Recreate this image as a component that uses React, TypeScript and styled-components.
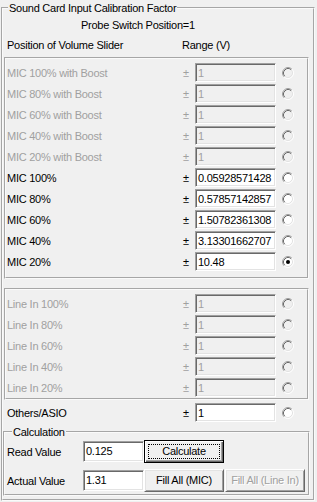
import React from 'react';
import styled, { createGlobalStyle, css } from 'styled-components';

const GlobalStyle = createGlobalStyle`
  html, body {
    margin: 0;
    padding: 0;
    background: #f0f0f0;
  }
  body {
    font-family: "Liberation Sans", Arial, sans-serif;
    font-size: 11px;
    line-height: 13px;
    letter-spacing: -0.25px;
    color: #000;
  }
`;

const Window = styled.div`
  width: 317px;
  height: 502px;
  overflow: hidden;
`;

const etched = css`
  box-sizing: border-box;
  min-width: 0;
  border: 2px groove #fafafa;
`;

const OuterGroup = styled.fieldset`
  ${etched}
  width: 314px;
  margin: 2px 0 0 1px;
  padding: 0 0 3px;
`;

const Caption = styled.legend`
  margin-left: 5px;
  padding: 0 1px;
  line-height: 12px;
`;

const ProbeLine = styled.div`
  margin: 5px 0 0 78px;
`;

const HeaderRow = styled.div`
  display: grid;
  grid-template-columns: 175px auto;
  margin-top: 7px;
  padding-left: 4px;
`;

const ChannelGroup = styled.fieldset<{ $top: number; $bottom: number }>`
  ${etched}
  display: flex;
  flex-direction: column;
  gap: 2px;
  width: 305px;
  margin: ${p => p.$top}px 0 0 1px;
  padding: 4px 0 ${p => p.$bottom}px;
`;

const Row = styled.div<{ $indent: number; $disabled?: boolean; $top?: number }>`
  display: grid;
  grid-template-columns: 175px 13px 81px 18px;
  align-items: center;
  height: 19px;
  margin-top: ${p => p.$top ?? 0}px;
  padding-left: ${p => p.$indent}px;
  color: ${p => (p.$disabled ? '#a0a0a0' : '#000')};
`;

const RowLabel = styled.span`
  padding-top: 1px;
  white-space: nowrap;
`;

const PlusMinus = styled.span`
  padding: 1px 0 0 1px;
`;

const ValueBox = styled.div<{ $disabled?: boolean; $height?: number }>`
  box-sizing: border-box;
  height: ${p => p.$height ?? 19}px;
  padding: 3px 0 0 2px;
  border: 1px solid;
  border-color: #a0a0a0 #fff #fff #a0a0a0;
  box-shadow: inset 1px 1px #696969, inset -1px -1px #e3e3e3;
  background: ${p => (p.$disabled ? '#f0f0f0' : '#fff')};
  color: ${p => (p.$disabled ? '#a0a0a0' : '#000')};
  white-space: nowrap;
  overflow: hidden;
`;

const RadioIcon = styled.svg`
  display: block;
  justify-self: end;
`;

const CalcGroup = styled.fieldset`
  ${etched}
  display: flex;
  flex-direction: column;
  gap: 6px;
  width: 307px;
  margin: 4px 0 0;
  padding: 2px 0 2px 2px;
`;

const CalcRow = styled.div`
  display: grid;
  grid-template-columns: 76px 61px 81px 80px;
  align-items: center;
  height: 23px;
`;

const CalcLabel = styled.span`
  padding-top: 1px;
`;

const PushButton = styled.button<{ $default?: boolean }>`
  box-sizing: border-box;
  width: 80px;
  height: 23px;
  margin: 0;
  padding: 0 0 1px;
  font: inherit;
  letter-spacing: inherit;
  color: #000;
  background: #f0f0f0;
  border: 1px solid;
  border-color: #fff #696969 #696969 #fff;
  box-shadow: inset 1px 1px #e3e3e3, inset -1px -1px #a0a0a0;
  white-space: nowrap;

  ${p =>
    p.$default &&
    css`
      border-color: #000;
      box-shadow: inset 1px 1px #fff, inset -1px -1px #696969, inset -2px -2px #a0a0a0;
      outline: 1px dotted #000;
      outline-offset: -5px;
    `}

  &:disabled {
    color: #a0a0a0;
    text-shadow: 1px 1px #fff;
  }
`;

type Channel = { label: string; value: string; disabled?: boolean; checked?: boolean };

const micChannels: Channel[] = [
  { label: 'MIC 100% with Boost', value: '1', disabled: true },
  { label: 'MIC 80% with Boost', value: '1', disabled: true },
  { label: 'MIC 60% with Boost', value: '1', disabled: true },
  { label: 'MIC 40% with Boost', value: '1', disabled: true },
  { label: 'MIC 20% with Boost', value: '1', disabled: true },
  { label: 'MIC 100%', value: '0.05928571428' },
  { label: 'MIC 80%', value: '0.57857142857' },
  { label: 'MIC 60%', value: '1.50782361308' },
  { label: 'MIC 40%', value: '3.13301662707' },
  { label: 'MIC 20%', value: '10.48', checked: true },
];

const lineInChannels: Channel[] = ['100', '80', '60', '40', '20'].map(p => ({
  label: `Line In ${p}%`,
  value: '1',
  disabled: true,
}));

const RadioMark = ({ checked, disabled }: { checked?: boolean; disabled?: boolean }) => (
  <RadioIcon width="12" height="12" viewBox="0 0 12 12">
    <circle cx="6" cy="6" r="5" fill={disabled ? '#f0f0f0' : '#fff'} />
    <path d="M2.11 9.89A5.5 5.5 0 0 1 9.89 2.11" stroke="#a0a0a0" fill="none" />
    <path d="M9.89 2.11A5.5 5.5 0 0 1 2.11 9.89" stroke="#fff" fill="none" />
    <path d="M2.82 9.18A4.5 4.5 0 0 1 9.18 2.82" stroke="#696969" fill="none" />
    <path d="M9.18 2.82A4.5 4.5 0 0 1 2.82 9.18" stroke="#e3e3e3" fill="none" />
    {checked && <circle cx="6" cy="6" r="2" fill="#000" />}
  </RadioIcon>
);

const ChannelLine = ({ channel, indent, top }: { channel: Channel; indent: number; top?: number }) => (
  <Row $indent={indent} $disabled={channel.disabled} $top={top}>
    <RowLabel>{channel.label}</RowLabel>
    <PlusMinus>±</PlusMinus>
    <ValueBox $disabled={channel.disabled}>{channel.value}</ValueBox>
    <RadioMark checked={channel.checked} disabled={channel.disabled} />
  </Row>
);

export default function App() {
  return (
    <Window>
      <GlobalStyle />
      <OuterGroup>
        <Caption>Sound Card Input Calibration Factor</Caption>
        <ProbeLine>Probe Switch Position=1</ProbeLine>
        <HeaderRow>
          <span>Position of Volume Slider</span>
          <span>Range (V)</span>
        </HeaderRow>

        <ChannelGroup $top={5} $bottom={6}>
          {micChannels.map(c => (
            <ChannelLine key={c.label} channel={c} indent={1} />
          ))}
        </ChannelGroup>

        <ChannelGroup $top={9} $bottom={1}>
          {lineInChannels.map(c => (
            <ChannelLine key={c.label} channel={c} indent={1} />
          ))}
        </ChannelGroup>

        <ChannelLine channel={{ label: 'Others/ASIO', value: '1' }} indent={4} top={3} />

        <CalcGroup>
          <Caption>Calculation</Caption>
          <CalcRow>
            <CalcLabel>Read Value</CalcLabel>
            <ValueBox $height={21}>0.125</ValueBox>
            <PushButton $default>Calculate</PushButton>
          </CalcRow>
          <CalcRow>
            <CalcLabel>Actual Value</CalcLabel>
            <ValueBox $height={21}>1.31</ValueBox>
            <PushButton>Fill All (MIC)</PushButton>
            <PushButton disabled>Fill All (Line In)</PushButton>
          </CalcRow>
        </CalcGroup>
      </OuterGroup>
    </Window>
  );
}
